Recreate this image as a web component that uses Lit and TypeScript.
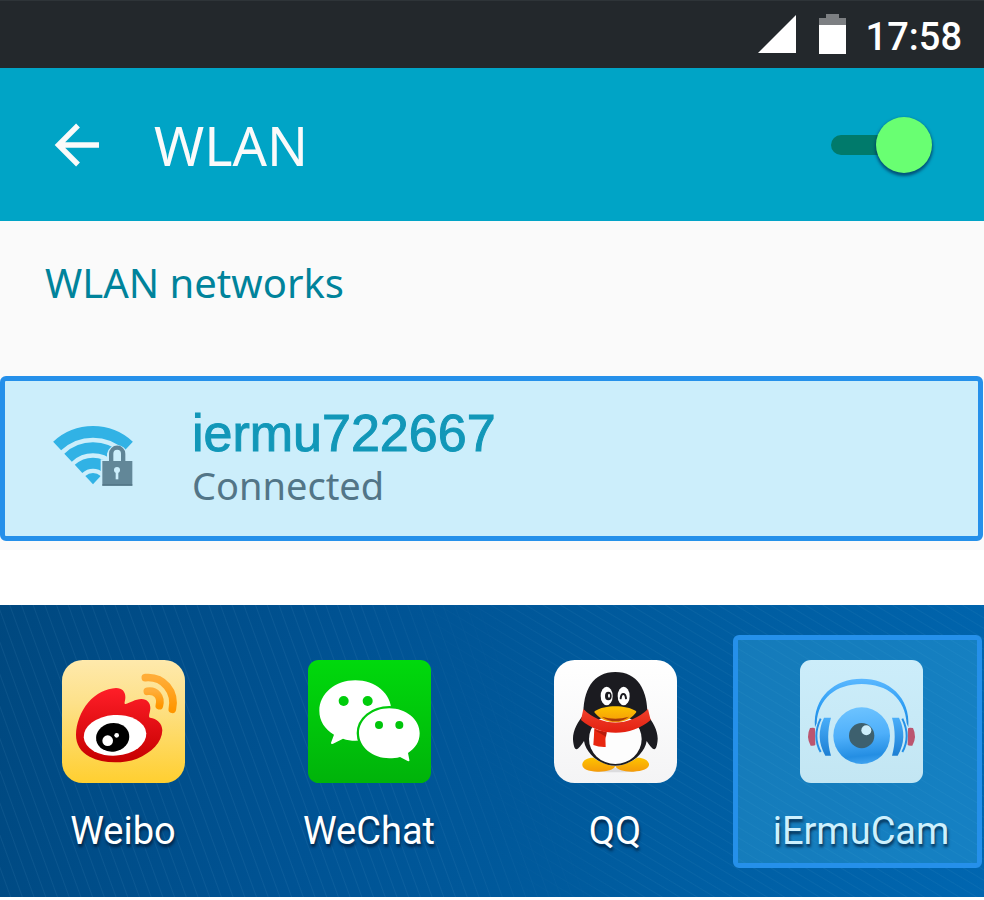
import { LitElement, html, css, svg } from "lit";
import { customElement, state } from "lit/decorators.js";

const weibo = svg`
  <defs>
    <linearGradient id="bg" x1="0" y1="0" x2="0" y2="1"><stop offset="0" stop-color="#fee9ac"/><stop offset="0.35" stop-color="#fde18a"/><stop offset="1" stop-color="#ffcf30"/></linearGradient>
    <linearGradient id="red" x1="0" y1="0" x2="0" y2="1"><stop offset="0" stop-color="#ff1e28"/><stop offset="1" stop-color="#c60000"/></linearGradient>
    <linearGradient id="wave" x1="0" y1="0" x2="0" y2="1"><stop offset="0" stop-color="#ffad38"/><stop offset="1" stop-color="#ff9600"/></linearGradient>
  </defs>
  <rect width="369" height="369" rx="62" fill="url(#bg)"/>
  <path fill="url(#red)" d="M42 225C42 190 57 153 78 128C103 99 132 86 162 84C182 84 191 97 190 113C190 123 184 132 191 132C203 129 220 117 238 117C256 117 265 129 265 145C265 157 257 170 264 173C284 175 301 190 301 211C300 247 269 278 225 296C177 313 121 310 83 290C55 276 42 252 42 225Z"/>
  <ellipse cx="159" cy="226" rx="94" ry="61" fill="#fff" transform="rotate(-4 159 226)"/>
  <ellipse cx="152" cy="232" rx="50" ry="43" transform="rotate(-10 152 232)"/>
  <circle cx="137" cy="242" r="16" fill="#fff"/><circle cx="164" cy="226" r="7" fill="#fff"/>
  <g fill="none" stroke="url(#wave)" stroke-width="23" stroke-linecap="round">
    <path d="M250 53C305 48 342 95 331 148"/><path d="M256 94C282 90 299 110 292 137"/>
  </g>`;

const wechat = svg`
  <defs><linearGradient id="green" gradientUnits="userSpaceOnUse" x1="0" y1="0" x2="0" y2="369"><stop offset="0" stop-color="#00d90c"/><stop offset="1" stop-color="#00b30a"/></linearGradient></defs>
  <rect width="369" height="369" rx="32" fill="url(#green)"/>
  <path fill="#fff" d="M142 61C82 61 34 101 34 152C34 182 50 207 78 224L69 248Q69 254 75 251L105 236C117 240 129 242 142 242C202 242 250 202 250 152C250 101 202 61 142 61Z"/>
  <path fill="#fff" stroke="url(#green)" stroke-width="14" paint-order="stroke" d="M244 145C194 145 153 178 153 220C153 262 194 295 244 295C255 295 265 294 276 291L299 303Q306 305 304 299L300 279C322 265 335 245 335 220C335 178 294 145 244 145Z"/>
  <g fill="url(#green)"><circle cx="107" cy="123" r="15"/><circle cx="179" cy="123" r="15"/><circle cx="213" cy="195" r="12"/><circle cx="274" cy="195" r="12"/></g>`;

const qq = svg`
  <defs>
    <linearGradient id="paper" x1="0" y1="0" x2="0" y2="1"><stop offset="0" stop-color="#fff"/><stop offset="1" stop-color="#f4f4f5"/></linearGradient>
    <linearGradient id="scarf" x1="0" y1="0" x2="0" y2="1"><stop offset="0" stop-color="#f0402c"/><stop offset="1" stop-color="#e32010"/></linearGradient>
    <linearGradient id="gold" x1="0" y1="0" x2="0" y2="1"><stop offset="0" stop-color="#fdc400"/><stop offset="1" stop-color="#f59b09"/></linearGradient>
  </defs>
  <rect width="369" height="369" rx="62" fill="url(#paper)"/>
  <ellipse cx="184" cy="330" rx="70" ry="7" fill="#dcdcde"/>
  <path fill="url(#gold)" d="M184 319C178 330 157 336 130 335C101 334 83 325 85 312C87 299 103 292 119 293C137 307 162 316 184 319Z"/>
  <path fill="url(#gold)" d="M184 319C190 330 211 336 238 335C267 334 287 325 285 312C283 299 265 292 249 293C231 307 206 316 184 319Z"/>
  <path fill="#1b1b20" d="M88 165C72 185 56 212 57 238C58 256 62 268 67 268C74 267 82 255 90 243C96 281 138 317 184 317C230 317 272 281 278 243C286 255 294 267 301 268C306 268 310 256 311 238C312 212 296 185 280 165Z"/>
  <ellipse cx="184" cy="237" rx="79" ry="75" fill="#fdfdfd"/>
  <path fill="#1b1b20" d="M88 175C85 88 118 36 184 36S283 88 280 175Z"/>
  <path fill="#e8260f" d="M121 205Q138 216 158 213Q152 237 155 261Q135 262 118 255Q120 230 121 205Z"/>
  <path fill="#b71b0c" d="M121 210L158 217L156 230Z"/>
  <path fill="url(#scarf)" d="M88 147C143 201 225 201 282 147L290 180C231 231 139 231 81 180Z"/>
  <ellipse cx="158" cy="108" rx="18" ry="28" fill="#fff"/><ellipse cx="209" cy="108" rx="18" ry="28" fill="#fff"/>
  <ellipse cx="163" cy="108" rx="10" ry="13" fill="#1b1b20"/><ellipse cx="165" cy="107" rx="3" ry="6" fill="#fff"/>
  <path fill="none" stroke="#1b1b20" stroke-width="6" stroke-linecap="round" d="M200 115C202 98 214 98 216 115"/>
  <path fill="url(#gold)" d="M123 153C152 134 216 134 246 153C248 156 246 159 243 161C215 195 154 195 125 161C121 158 120 155 123 153Z"/>
  <path fill="#a93b08" d="M143 170Q184 182 225 170Q186 198 143 170Z"/>`;

const earcup = svg`
  <path fill="#bb5670" d="M30 204Q45 202 45 206L46 254Q45 258 32 257Q17 231 30 204Z"/>
  <path fill="url(#cup)" d="M72 173H93C82 210 82 250 93 287H76Q44 231 72 173Z"/>
  <path fill="none" stroke="#2590e6" stroke-width="6" d="M62 176Q36 230 62 276"/>`;

const ermu = svg`
  <defs>
    <linearGradient id="ice" x1="0" y1="0" x2="0" y2="1"><stop offset="0" stop-color="#ccedfa"/><stop offset="1" stop-color="#c3e6f3"/></linearGradient>
    <linearGradient id="band" x1="0" y1="0" x2="0" y2="1"><stop offset="0" stop-color="#5bb8ff"/><stop offset="0.6" stop-color="#2b9cf3"/><stop offset="1" stop-color="#2389dc"/></linearGradient>
    <linearGradient id="cup" x1="0" y1="0" x2="0" y2="1"><stop offset="0" stop-color="#4aaef9"/><stop offset="1" stop-color="#1c7fd4"/></linearGradient>
    <linearGradient id="ball" x1="0.4" y1="0" x2="0.5" y2="1"><stop offset="0" stop-color="#6dc3ff"/><stop offset="0.5" stop-color="#4eaffa"/><stop offset="0.86" stop-color="#248ee3"/><stop offset="1" stop-color="#3fa2ef"/></linearGradient>
  </defs>
  <rect width="369" height="369" rx="33" fill="url(#ice)"/>
  <path fill="url(#band)" d="M45 202C38 110 105 56 185 56S332 110 325 202L320 190C316 115 262 72 185 72S54 115 50 190Z"/>
  ${earcup}
  <g transform="translate(369 0) scale(-1 1)">${earcup}</g>
  <circle cx="185" cy="227" r="85" fill="url(#ball)"/>
  <circle cx="185" cy="227" r="38" fill="#3d606e"/>
  <circle cx="199" cy="211" r="15" fill="#cdeefb"/>`;

const apps = [
  { name: "Weibo", art: weibo },
  { name: "WeChat", art: wechat },
  { name: "QQ", art: qq },
  { name: "iErmuCam", art: ermu, selected: true },
];

@customElement("app-tile")
class AppTile extends LitElement {
  static properties = { app: { attribute: false } };
  declare app: (typeof apps)[number];

  static styles = css`
    :host { display: block; position: relative; }
    .tile {
      position: relative;
      display: flex; flex-direction: column; align-items: center; gap: 24px;
      width: 100%; padding: 55px 0 42px; border: 0; background: none; cursor: pointer;
      font: 400 38px/48px Roboto, sans-serif; color: #fff;
      text-shadow: 1px 3px 3px rgba(0, 20, 45, 0.75);
    }
    .art { display: block; width: 123px; height: 123px; }
    .selected { color: #cdf0fd; }
    .frame {
      position: absolute; inset: 30px 2px 29px -5px; box-sizing: border-box;
      border: 5px solid #2590ea; border-radius: 6px;
      background: rgba(76, 204, 252, 0.27); background-clip: padding-box;
    }
  `;

  render() {
    const { name, art, selected } = this.app;
    return html`
      ${selected ? html`<div class="frame"></div>` : ""}
      <button class="tile ${selected ? "selected" : ""}">
        <svg class="art" viewBox="0 0 369 369" aria-hidden="true">${art}</svg>
        <span>${name}</span>
      </button>`;
  }
}

@customElement("app-root")
class AppRoot extends LitElement {
  @state() wlanOn = true;

  static styles = css`
    :host { display: block; background: #fff; font-family: "Noto Sans", sans-serif; }
    .status {
      display: flex; align-items: center; justify-content: flex-end; box-sizing: border-box;
      height: 68px; padding: 0 22px; background: #23282c; border-top: 1px solid #2e3438;
      color: #fff; font: 500 38px/48px Roboto, sans-serif;
    }
    .signal { width: 38px; height: 38px; margin: 0 23px 2px 0; }
    .battery { width: 27px; height: 40px; margin: 0 20px 2px 0; }
    .clock { padding-top: 4px; }
    .bar {
      display: flex; align-items: center; box-sizing: border-box;
      height: 153px; padding: 0 52px; background: #00a4c6; color: #fafafa;
    }
    .back { display: flex; padding: 0; border: 0; background: none; color: inherit; cursor: pointer; }
    .arrow { width: 48px; height: 48px; }
    .title { flex: 1; margin: 0 0 0 54px; font-size: 54px; font-weight: 400; line-height: 72px; }
    .switch {
      appearance: none; display: flex; align-items: center; justify-content: flex-start;
      width: 101px; height: 20px; margin: 0; border-radius: 10px; background: #4b7f8c; cursor: pointer;
    }
    .switch::before {
      content: ""; flex: none; width: 56px; height: 56px; border-radius: 50%;
      background: #eee; box-shadow: 0 2px 3px 1px rgba(0, 50, 90, 0.7);
    }
    .switch:checked { justify-content: flex-end; background: #007a6b; }
    .switch:checked::before { background: #69ff72; }
    .networks { padding: 34px 0 9px; background: #fafafa; }
    .heading { margin: 0 45px 66px; font-size: 40px; font-weight: 400; line-height: 55px; color: #00839b; }
    .network {
      display: flex; align-items: center; box-sizing: border-box; width: calc(100% - 1px); min-height: 165px;
      padding: 0 39px 6px; border: 5px solid #2590ea; border-radius: 6px;
      background: #cceefb; text-align: left; cursor: pointer;
    }
    .wifi { flex: none; width: 100px; height: 80px; margin-right: 48px; }
    .info { display: flex; flex-direction: column; padding-top: 2px; }
    .ssid { font: 400 52px/56px "Liberation Sans", sans-serif; color: #1297b8; -webkit-text-stroke: 1px #1297b8; }
    .state { font: 400 38px/48px "Noto Sans", sans-serif; color: #527587; }
    .launcher {
      position: relative; display: grid; grid-template-columns: repeat(4, 1fr); margin-top: 55px;
      background: linear-gradient(107deg, #00487f 0%, #005394 35%, #005c9f 65%, #0066b0 100%);
    }
    .launcher::before, .launcher::after { content: ""; position: absolute; inset: 0; pointer-events: none; }
    .launcher::before {
      background: repeating-linear-gradient(70deg, transparent 0 9px, rgba(110, 180, 220, 0.1) 10px, transparent 11px);
      mask-image: linear-gradient(70deg, #000 42%, transparent 56%);
    }
    .launcher::after {
      background: repeating-linear-gradient(31deg, transparent 0 7px, rgba(110, 190, 220, 0.08) 8px, transparent 9px);
      mask-image: linear-gradient(70deg, transparent 46%, #000 60%);
    }
    .cell { z-index: 1; }
  `;

  render() {
    return html`
      <div class="status">
        <svg class="signal" viewBox="0 0 38 38" aria-hidden="true"><path fill="#fff" d="M0 38L38 0V38Z"/></svg>
        <svg class="battery" viewBox="0 0 27 40" aria-hidden="true"><path fill="#7c7f82" d="M7 0H20V4H27V11H0V4H7Z"/><path fill="#fff" d="M0 11H27V40H0Z"/></svg>
        <time class="clock">17:58</time>
      </div>
      <header class="bar">
        <button class="back" aria-label="Back">
          <svg class="arrow" viewBox="0 0 48 48" aria-hidden="true"><path fill="none" stroke="currentColor" stroke-width="5.4" d="M26 4.500L6.500 24L26 43.500M6 24H47"/></svg>
        </button>
        <h1 class="title">WLAN</h1>
        <input class="switch" type="checkbox" role="switch" aria-label="WLAN" .checked=${this.wlanOn}
          @change=${(e: Event) => (this.wlanOn = (e.target as HTMLInputElement).checked)}>
      </header>
      <section class="networks">
        <h2 class="heading">WLAN networks</h2>
        <button class="network">
          <svg class="wifi" viewBox="0 0 300 240" aria-hidden="true">
            <g fill="none" stroke="#31b2e5">
              <path stroke-width="35" d="M39.400 90A157.500 157.500 0 0 1 254.600 90"/>
              <path stroke-width="33" d="M72.200 125A109.500 109.500 0 0 1 221.800 125"/>
              <path stroke-width="33" d="M103.600 158.600A63.500 63.500 0 0 1 190.400 158.600"/>
            </g>
            <path fill="#31b2e5" d="M147 205L124 180A34 34 0 0 1 170 180Z"/>
            <path fill="#cceefb" d="M170 130H189V113A31 31 0 0 1 250 113V130H269V212H170Z"/>
            <path fill="none" stroke="#5f8496" stroke-width="13" d="M201.500 137V113A18 18 0 0 1 237.500 113V137"/>
            <path fill="#628798" d="M175 135H265V209H175Z"/><path fill="#4f7282" d="M175 205H265V209H175Z"/>
            <circle cx="219" cy="162" r="9" fill="#cceefb"/><path fill="#cceefb" d="M215 165H223V190H215Z"/>
          </svg>
          <span class="info"><span class="ssid">iermu722667</span><span class="state">Connected</span></span>
        </button>
      </section>
      <nav class="launcher" aria-label="Apps">
        ${apps.map((app) => html`<app-tile class="cell" .app=${app}></app-tile>`)}
      </nav>`;
  }
}
